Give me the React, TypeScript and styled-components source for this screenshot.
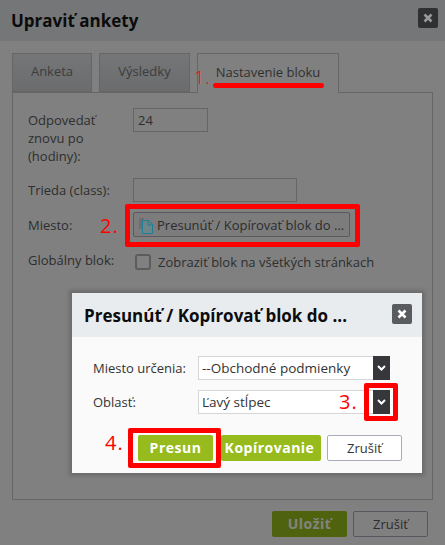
import React from "react";
import styled, { createGlobalStyle } from "styled-components";

const Global = createGlobalStyle`
  html, body { margin: 0; padding: 0; background: #808080; }
  body { font-family: "Open Sans", "Noto Sans", sans-serif; width: 445px; height: 545px; overflow: hidden; position: relative; }
  * { box-sizing: border-box; }
`;

const Page = styled.div`
  width: 445px; height: 545px; position: relative; overflow: hidden; background: #808080; color: #2e2e2e;
  font-size: 13px; line-height: 18px;
`;
const Header = styled.header<{ $light?: boolean }>`
  display: flex; align-items: center; justify-content: space-between;
  height: ${p => (p.$light ? 44 : 41)}px;
  padding: ${p => (p.$light ? "0 10px 0 12px" : "0 7px 0 11px")};
  background: ${p => (p.$light ? "#e9ecef" : "#757678")};
`;
const Title = styled.h1<{ $light?: boolean }>`
  margin: ${p => (p.$light ? "2px 0 0" : "0")}; font-size: 17px; line-height: 24px; font-weight: 700; color: #0c0c0c;
`;
const CloseBtn = styled.div<{ $light?: boolean }>`
  width: 20px; height: 20px; border-radius: 2px; display: flex; align-items: center; justify-content: center;
  align-self: flex-start; margin-top: ${p => (p.$light ? 11 : 8)}px;
  background: ${p => (p.$light ? "#5a5b5e" : "#2f3032")};
  color: ${p => (p.$light ? "#fff" : "#999")};
`;
const Content = styled.main`padding: 12px 12px 0;`;
const Tabs = styled.nav`display: flex; gap: 7px; height: 39px; position: relative; z-index: 0;`;
const Tab = styled.div<{ $active?: boolean; $w: number }>`
  width: ${p => p.$w}px; height: ${p => (p.$active ? 40 : 39)}px; display: flex; align-items: center; justify-content: center;
  border: 1px solid #666;
  border-bottom: ${p => (p.$active ? "none" : "1px solid #666")};
  background: ${p => (p.$active ? "#808080" : "linear-gradient(#757677,#6b6c6d)")};
  color: ${p => (p.$active ? "#303030" : "#3c3c3c")};
  font-size: 13px; padding-bottom: ${p => (p.$active ? 4 : 3)}px;
`;
const Panel = styled.section`
  height: 408px; border: 1px solid #666; padding: 15px 15px 0;
  display: flex; flex-direction: column;
`;
const Row = styled.div<{ $h: number }>`
  display: grid; grid-template-columns: 105px 1fr; height: ${p => p.$h}px;
`;
const Label = styled.label<{ $top?: number }>`
  display: block; margin-top: ${p => p.$top ?? 3}px; font-size: 13px; line-height: 18px; color: #2e2e2e;
`;
const Input = styled.div<{ $w: number }>`
  width: ${p => p.$w}px; height: 24px; border: 1px solid #666; padding: 2px 4px; font-size: 13px; line-height: 18px;
`;
const MoveBtn = styled.div`
  width: 217px; height: 25px; border: 1px solid #5a5a5e; border-radius: 2px; background: #7c7c7c;
  display: flex; align-items: center; padding-left: 4px; gap: 2px; font-size: 13px; color: #2c2c2c; white-space: nowrap;
`;
const CheckRow = styled.div`display: flex; align-items: center; gap: 7px; padding-left: 2px; height: 16px; white-space: nowrap;`;
const Check = styled.span`
  width: 16px; height: 16px; border: 2px solid #5c5c5c; border-radius: 3px; flex: none;
`;
const Footer = styled.footer`display: flex; justify-content: flex-end; gap: 6px; padding: 11px 5px 0 0;`;
const Btn = styled.div<{ $kind: "dim" | "ghost" | "green" | "white"; $w: number; $pr?: number }>`
  width: ${p => p.$w}px; height: 26px; border-radius: 2px; display: flex; align-items: center; justify-content: center;
  font-size: 13px; white-space: nowrap; padding-right: ${p => p.$pr ?? 0}px;
  ${p => p.$kind === "dim" && "background:#4f630f;color:#838383;font-weight:700;font-size:14px;letter-spacing:.5px;"}
  ${p => p.$kind === "ghost" && "border:1px solid #565860;color:#2c2c2c;"}
  ${p => p.$kind === "green" && "background:#97bb1c;color:#fff;font-weight:700;font-size:14px;letter-spacing:.5px;"}
  ${p => p.$kind === "white" && "background:#fff;border:1px solid #a9acb8;color:#333;"}
`;
const Modal = styled.div`
  position: absolute; left: 72px; top: 293px; width: 350px; height: 180px; background: #fafafa;
  box-shadow: 0 0 4px 3px rgba(0,0,0,.16);
`;
const ModalBody = styled.div`padding: 19px 0 0 21px;`;
const ModalRow = styled.div`display: grid; grid-template-columns: 105px auto; margin-bottom: 10px; height: 24px; align-items: center;`;
const ModalLabel = styled.label`font-size: 13px; color: #333;`;
const Select = styled.div`
  width: 192px; height: 24px; border: 1px solid #d4d6da; background: #fff; display: flex; justify-content: space-between;
  font-size: 13.5px; line-height: 22px; padding-left: 3px; color: #333;
`;
const SelectArrow = styled.span`
  width: 17px; height: 24px; margin: -1px -1px 0 0; background: #35373a; color: #fff; display: flex; align-items: center; justify-content: center; flex: none;
`;
const ModalActions = styled.div`display: flex; padding: 11px 0 0 45px; gap: 6px;`;
const PrimaryGap = styled.span`width: 2px; flex: none; margin-right: -6px;`;
const Annot = styled.div<{ $x: number; $y: number; $w: number; $h: number }>`
  position: absolute; left: ${p => p.$x}px; top: ${p => p.$y}px; width: ${p => p.$w}px; height: ${p => p.$h}px;
  border: 5px solid #fe0000; border-radius: 2px;
`;
const Num = styled.span<{ $x: number; $y: number; $s?: number; $thin?: boolean }>`
  position: absolute; left: ${p => p.$x}px; top: ${p => p.$y}px; color: #fe0000; font-size: ${p => p.$s ?? 20}px; line-height: 24px;
  font-family: "Open Sans", sans-serif; font-weight: ${p => (p.$thin ? 300 : 400)}; letter-spacing: 1px;
`;
const Underline = styled.div`position: absolute; left: 213px; top: 83px; width: 111px; height: 5px; border-radius: 3px; background: #fe0000;`;

const X = () => (
  <svg width="10" height="10" viewBox="0 0 10 10"><path d="M1.5 1.5 8.5 8.5M8.5 1.5 1.5 8.5" stroke="currentColor" strokeWidth="2.6" /></svg>
);
const Chev = () => (
  <svg width="9" height="6" viewBox="0 0 9 6"><path d="M1 1 4.5 4.5 8 1" fill="none" stroke="currentColor" strokeWidth="2" /></svg>
);
const FileIcon = () => (
  <svg width="17" height="20" viewBox="0 0 17 20">
    <rect x="1" y="3" width="5" height="11" fill="#6e6e6e" />
    <path d="M4.5 5.5h6l4 4v9h-10z" fill="#6f8688" stroke="#1b7f99" strokeWidth="1" />
    <path d="M10 5.5v4.5h4.5" fill="none" stroke="#1b7f99" strokeWidth="1" />
  </svg>
);

export default function App() {
  return (
    <Page>
      <Global />
      <Header>
        <Title>Upraviť ankety</Title>
        <CloseBtn><X /></CloseBtn>
      </Header>
      <Content>
        <Tabs>
          <Tab $w={80}>Anketa</Tab>
          <Tab $w={91}>Výsledky</Tab>
          <Tab $w={142} $active>Nastavenie bloku</Tab>
        </Tabs>
        <Panel>
          <Row $h={70}>
            <Label>Odpovedať znovu po (hodiny):</Label>
            <Input $w={75}>24</Input>
          </Row>
          <Row $h={34}>
            <Label>Trieda (class):</Label>
            <Input $w={164} />
          </Row>
          <Row $h={42}>
            <Label $top={4}>Miesto:</Label>
            <MoveBtn><FileIcon />Presunúť / Kopírovať blok do ...</MoveBtn>
          </Row>
          <Row $h={24}>
            <Label $top={-3}>Globálny blok:</Label>
            <CheckRow><Check />Zobraziť blok na všetkých stránkach</CheckRow>
          </Row>
        </Panel>
        <Footer>
          <Btn $kind="dim" $w={75}>Uložiť</Btn>
          <Btn $kind="ghost" $w={75}>Zrušiť</Btn>
        </Footer>
      </Content>
      <Modal>
        <Header $light>
          <Title $light>Presunúť / Kopírovať blok do ...</Title>
          <CloseBtn $light><X /></CloseBtn>
        </Header>
        <ModalBody>
          <ModalRow>
            <ModalLabel>Miesto určenia:</ModalLabel>
            <Select>--Obchodné podmienky<SelectArrow><Chev /></SelectArrow></Select>
          </ModalRow>
          <ModalRow>
            <ModalLabel>Oblasť:</ModalLabel>
            <Select>Ľavý stĺpec<SelectArrow><Chev /></SelectArrow></Select>
          </ModalRow>
          <ModalActions>
            <Btn $kind="green" $w={75}>Presun</Btn>
            <PrimaryGap />
            <Btn $kind="green" $w={100} $pr={3}>Kopírovanie</Btn>
            <Btn $kind="white" $w={75}>Zrušiť</Btn>
          </ModalActions>
        </ModalBody>
      </Modal>
      <Underline />
      <Annot $x={125} $y={204} $w={235} $h={43} />
      <Annot $x={364} $y={383} $w={34} $h={38} />
      <Annot $x={128} $y={428} $w={93} $h={40} />
      <Num $x={194} $y={65} $s={18} $thin>1.</Num>
      <Num $x={100} $y={214}>2.</Num>
      <Num $x={339} $y={390}>3.</Num>
      <Num $x={105} $y={431}>4.</Num>
    </Page>
  );
}
